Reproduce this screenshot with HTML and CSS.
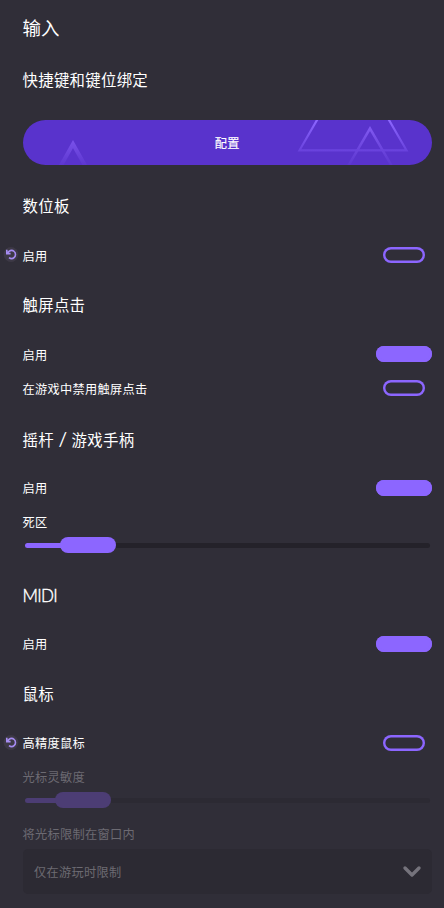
FILE: index.html
```html
<!DOCTYPE html>
<html lang="zh">
<head>
<meta charset="utf-8">
<title>输入</title>
<link rel="stylesheet" href="styles.css">
</head>
<body>
<main class="panel">
  <h1 class="title">输入</h1>

  <section class="section bindings">
    <h2 class="heading">快捷键和键位绑定</h2>
    <button class="configure">
      <svg class="triangles" viewBox="0 0 409.5 44.5" preserveAspectRatio="none" aria-hidden="true">
        <defs>
          <linearGradient id="fade-small" gradientUnits="userSpaceOnUse" x1="0" y1="20" x2="0" y2="45"><stop offset="0" stop-color="#7a52ea"/><stop offset="1" stop-color="#5d37d0"/></linearGradient>
          <linearGradient id="fade-big" gradientUnits="userSpaceOnUse" x1="0" y1="0" x2="0" y2="32"><stop offset="0" stop-color="#8c66ff"/><stop offset="1" stop-color="#6841dc"/></linearGradient>
          <linearGradient id="fade-mid" gradientUnits="userSpaceOnUse" x1="0" y1="6" x2="0" y2="45"><stop offset="0" stop-color="#8159f1"/><stop offset="1" stop-color="#5d37d0"/></linearGradient>
        </defs>
        <path d="M36 49L50 24L64 49" stroke="url(#fade-small)" stroke-width="4"/>
        <path d="M297.500-6L276.500 30.300H383.500L362.500-6" stroke="url(#fade-big)" stroke-width="2.200"/>
        <path d="M323.500 49L347 8.500L370.500 49" stroke="url(#fade-mid)" stroke-width="2.500"/>
      </svg>
      <span class="configure-text">配置</span>
    </button>
  </section>

  <section class="section tablet">
    <h2 class="heading">数位板</h2>
    <div class="row">
      <svg class="revert" viewBox="0 0 16 16"><circle cx="8" cy="7.500" r="7.400"/><path d="M3.800 2.800V6.600H7.600M4.200 6.200L6 4.400C7.500 3.200 9.700 3.100 11.200 4.500C12.900 6 12.900 8.800 11.300 10.400C9.900 11.800 7.600 11.900 6 10.700"/></svg>
      <span class="label">启用</span><span class="toggle"></span>
    </div>
  </section>

  <section class="section touch">
    <h2 class="heading">触屏点击</h2>
    <div class="row"><span class="label">启用</span><span class="toggle on"></span></div>
    <div class="row"><span class="label">在游戏中禁用触屏点击</span><span class="toggle"></span></div>
  </section>

  <section class="section joystick">
    <h2 class="heading">摇杆<span class="slash">/</span>游戏手柄</h2>
    <div class="row"><span class="label">启用</span><span class="toggle on"></span></div>
    <div class="row"><span class="label">死区</span></div>
    <div class="slider"><span class="fill"></span><span class="knob"></span><span class="rest"></span></div>
  </section>

  <section class="section midi">
    <h2 class="heading latin">MIDI</h2>
    <div class="row"><span class="label">启用</span><span class="toggle on"></span></div>
  </section>

  <section class="section mouse">
    <h2 class="heading">鼠标</h2>
    <div class="row">
      <svg class="revert" viewBox="0 0 16 16"><circle cx="8" cy="7.500" r="7.400"/><path d="M3.800 2.800V6.600H7.600M4.200 6.200L6 4.400C7.500 3.200 9.700 3.100 11.200 4.500C12.900 6 12.900 8.800 11.300 10.400C9.900 11.800 7.600 11.900 6 10.700"/></svg>
      <span class="label">高精度鼠标</span><span class="toggle"></span>
    </div>
    <div class="row disabled"><span class="label">光标灵敏度</span></div>
    <div class="slider dim"><span class="fill"></span><span class="knob"></span><span class="rest"></span></div>
    <div class="row disabled confine"><span class="label">将光标限制在窗口内</span></div>
    <div class="dropdown">
      <span class="label">仅在游玩时限制</span>
      <svg class="chevron" viewBox="0 0 20 14"><path d="M3 3L10 10L17 3"/></svg>
    </div>
  </section>
</main>
</body>
</html>
```
FILE: styles.css
```css
* { box-sizing: border-box; }

body {
  margin: 0;
  background: #302e38;
  color: #fff;
  font-family: "Noto Sans CJK JP", "Noto Sans CJK SC", sans-serif;
}

.panel {
  height: 908px;
  padding: 15px 12px 0 22.5px;
  overflow: hidden;
}

.title,
.heading {
  margin: 0;
  font-weight: 400;
  white-space: nowrap;
}

.title {
  height: 24px;
  line-height: 24px;
  font-size: 18.5px;
}

.heading {
  height: 24px;
  margin-bottom: 29px;
  line-height: 22px;
  font-size: 15.4px;
  letter-spacing: 0.3px;
}

.heading.latin {
  padding-top: 2px;
  font-family: Lato, sans-serif;
  font-size: 17px;
  font-weight: 300;
  letter-spacing: -0.7px;
  -webkit-text-stroke: 0.4px #fff;
}

.slash {
  display: inline-block;
  width: 17.7px;
  padding-left: 4.5px;
  font-family: Lato, sans-serif;
  font-size: 19px;
  line-height: 20px;
}

.bindings { margin-top: 29px; }
.bindings .heading { margin-bottom: 28px; }
.touch { margin-top: 30px; }
.joystick { margin-top: 31px; }
.joystick .heading { padding-top: 1px; }
.midi { margin-top: 30px; }
.mouse { margin-top: 30px; }

.configure {
  position: relative;
  display: flex;
  align-items: center;
  justify-content: center;
  width: 100%;
  height: 44.5px;
  margin-bottom: 29.5px;
  padding: 1px 0 0;
  border: 0;
  border-radius: 23px;
  overflow: hidden;
  background: #5933cc;
  color: #fff;
  font: 400 12.2px "Noto Sans CJK JP", sans-serif;
  letter-spacing: 0.3px;
  -webkit-text-stroke: 0.15px #fff;
}

.triangles {
  position: absolute;
  inset: 0;
  width: 100%;
  height: 100%;
  fill: none;
}

.configure-text { position: relative; }

.row {
  position: relative;
  display: flex;
  align-items: center;
  justify-content: space-between;
  height: 16px;
}

.row + .row { margin-top: 18px; }

.label {
  font-size: 12.2px;
  letter-spacing: 0.3px;
  line-height: 16px;
  white-space: nowrap;
}

.tablet .label,
.touch .label { padding-top: 1px; }

.toggle {
  width: 42px;
  height: 16px;
  margin-right: 7px;
  border-radius: 8px;
  box-shadow: inset 0 0 0 2.4px #8c66ff;
}

.toggle.on {
  width: 56px;
  margin-right: 0;
  background: #8c66ff;
}

.revert {
  position: absolute;
  left: -19.500px;
  top: 0;
  width: 16px;
  height: 16px;
}

.revert circle { fill: #3d3946; }

.revert path {
  fill: none;
  stroke: #a68cf2;
  stroke-width: 1.6;
}

.slider {
  display: flex;
  align-items: center;
  height: 16px;
  margin: 7px 2.5px 0;
}

.fill {
  width: 35px;
  height: 5px;
  border-radius: 3px 0 0 3px;
  background: #8c66ff;
  box-shadow: 4px 0 #8c66ff;
}

.knob {
  width: 56px;
  height: 16px;
  border-radius: 8px;
  background: #8c66ff;
}

.rest {
  flex: 1;
  height: 5px;
  border-radius: 0 3px 3px 0;
  background: #24222a;
}

.disabled { color: #6c6a72; }
.dim .fill { width: 30px; background: #4c3d74; box-shadow: 4px 0 #4c3d74; }
.dim .knob { background: #4c3d74; }
.dim .rest { background: #2c2a33; }
.confine { margin-top: 18px; }

.dropdown {
  display: flex;
  align-items: center;
  justify-content: space-between;
  height: 45px;
  margin-top: 7px;
  padding: 0 10px 0 11.500px;
  border-radius: 5px;
  background: #2c2a33;
  color: #6c6a72;
}

.chevron {
  width: 20px;
  height: 14px;
  fill: none;
  stroke: #75737c;
  stroke-width: 3.4;
  stroke-linecap: round;
  stroke-linejoin: round;
}
```
